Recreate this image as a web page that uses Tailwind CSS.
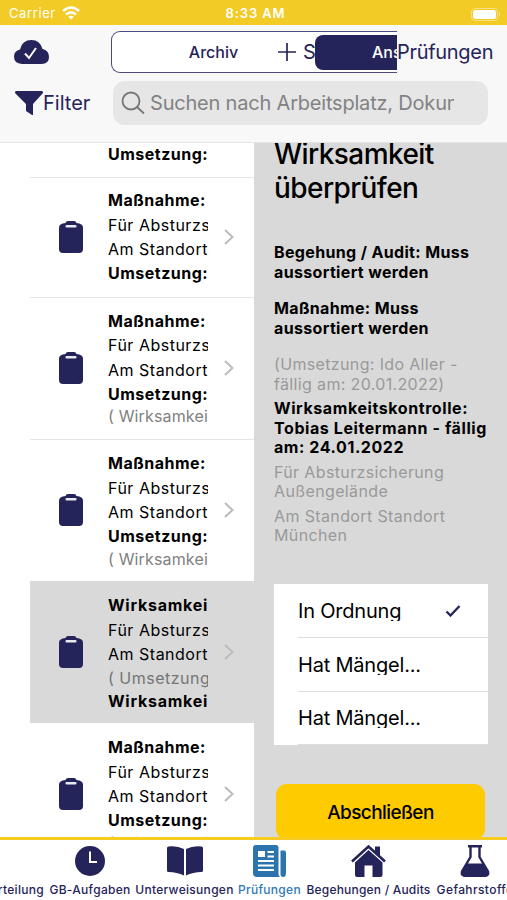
<!DOCTYPE html>
<html lang="de">
<head>
  <meta charset="UTF-8">
  <meta name="viewport" content="width=device-width, initial-scale=1.0">
  <title>Prüfungen</title>
  <script src="https://cdn.jsdelivr.net/npm/@tailwindcss/browser@4"></script>
</head>
<body class="w-[507px] h-[900px] overflow-hidden bg-white font-['Inter','Liberation_Sans',sans-serif] text-black flex flex-col whitespace-nowrap">

  <!-- Icons used more than once -->
  <svg class="hidden">
    <symbol id="clipboard" viewBox="0 0 24 32">
      <path fill="#25245a" d="M6.500 2Q7 0 9 0h6q2 0 2.500 2 6.500.5 6.500 4.500V28q0 4-4 4H4q-4 0-4-4V6.500Q0 2.500 6.500 2z"/>
      <rect x="6.500" y="4" width="11" height="2.600" rx="1" fill="#e9e9f2"/>
    </symbol>
    <symbol id="chevron" viewBox="0 0 10 16">
      <path d="M1 1l7.500 7L1 15" fill="none" stroke="#bcbcbe" stroke-width="2"/>
    </symbol>
  </svg>

  <!-- Status bar -->
  <div class="h-[25px] shrink-0 bg-[#f2cb27] text-white text-[13px] grid grid-cols-3 items-center pl-[9px] pr-[7px] pt-[3px]">
    <div class="flex items-center gap-[6px]">
      <span class="tracking-[0.600px]">Carrier</span>
      <svg class="w-[18px] h-[14px] mb-[2px]" viewBox="0 0 18 14" fill="none" stroke="#fff" stroke-width="2.600">
        <path d="M1 5q8-7 16 0"/>
        <path d="M4 8.500q5-4.300 10 0"/>
        <path d="M9 13.500L6.300 10.800q2.700-2.300 5.400 0z" fill="#fff" stroke="none"/>
      </svg>
    </div>
    <span class="text-center font-semibold tracking-[0.900px] pl-[2px]">8:33 AM</span>
    <div class="flex justify-end items-center gap-px">
      <div class="w-[27px] h-[13px] rounded-[4px] border border-white/40 p-px"><div class="bg-white h-full rounded-[2.500px]"></div></div>
      <div class="w-px h-1 bg-white/40"></div>
    </div>
  </div>

  <!-- Header -->
  <header class="h-[118px] shrink-0 bg-[#f8f8f8] border-b border-[#e6e6e6] text-[#25245a]">
    <div class="flex items-center pt-[6px] pl-[14px]">
      <svg class="w-[35px] h-[24px] mr-[62px]" viewBox="0 0 35 24">
        <path fill="#25245a" d="M8 24Q0 23.500 0 16.500 0 11 6 9.500 8 0 17.500 0 26 0 28.500 9 35 10.500 35 17q0 7-7.500 7z"/>
        <path d="M11 13.500l4 4.500 7-10" fill="none" stroke="#f8f8f8" stroke-width="2"/>
      </svg>
      <div class="relative w-[286px] h-[42px] border border-r-0 border-[#4b4a7a] rounded-l-[9px] bg-white flex items-center overflow-hidden">
        <span class="w-[203px] text-center text-base font-medium">Archiv</span>
        <div class="w-[82px] h-[35px] rounded-l-[8px] bg-[#25245a] text-white text-base font-medium flex items-center pl-[57px]">Ansicht</div>
        <!-- Add button overlapping the segments -->
        <div class="absolute left-[166px] top-0 h-full w-[37px] overflow-hidden flex items-center gap-[7px]">
          <svg class="w-[18px] h-[18px] shrink-0" viewBox="0 0 18 18" stroke="#25245a" stroke-width="1.700"><path d="M9 0v18M0 9h18"/></svg>
          <span class="text-[20px]">S</span>
        </div>
      </div>
      <span class="text-[20px] tracking-[-0.300px]">Prüfungen</span>
    </div>
    <div class="flex items-center pt-[8px] pl-[15px]">
      <div class="w-[98px] flex items-center">
        <svg class="w-[28px] h-[24px]" viewBox="0 0 28 24"><path fill="#25245a" d="M1 0h26q1 0 1 2L18 13v11h-1l-6-4v-7L0 2Q0 0 1 0z"/></svg>
        <span class="text-[20px]">Filter</span>
      </div>
      <div class="w-[375px] h-[44px] rounded-[12px] bg-[#e6e6e6] text-[#828284] flex items-center pl-[8px]">
        <svg class="w-[24px] h-[24px] mr-[5px]" viewBox="0 0 24 24" fill="none" stroke="#777779" stroke-width="1.800"><circle cx="10" cy="10" r="8.500"/><path d="M16 16l7 6.500"/></svg>
        <span class="w-[304px] overflow-hidden text-[20px] tracking-[-0.200px]">Suchen nach Arbeitsplatz, Dokumenten</span>
      </div>
    </div>
  </header>

  <main class="h-[694px] shrink-0 flex overflow-hidden">
    <!-- Task list -->
    <div class="w-[254px] pl-[30px] text-base tracking-[0.500px]">
      <div class="h-[35px] pl-[78px] border-b border-[#e4e4e4]">
        <div class="w-[100px] overflow-hidden font-bold leading-[22px]">Umsetzung:</div>
      </div>
      <div class="h-[120px] border-b border-[#e4e4e4] flex items-center pl-[29px] pb-px">
        <svg class="w-6 h-8"><use href="#clipboard"/></svg>
        <div class="w-[100px] ml-[25px] mr-[16px] overflow-hidden leading-[24.400px]">
          <p class="font-bold">Maßnahme:</p>
          <p>Für Absturzsicherung</p>
          <p>Am Standort München</p>
          <p class="font-bold">Umsetzung:</p>
        </div>
        <svg class="w-[10px] h-4"><use href="#chevron"/></svg>
      </div>
      <div class="h-[142px] border-b border-[#e4e4e4] flex items-center pl-[29px] pb-[2px]">
        <svg class="w-6 h-8"><use href="#clipboard"/></svg>
        <div class="w-[100px] ml-[25px] mr-[16px] overflow-hidden leading-[24.400px]">
          <p class="font-bold">Maßnahme:</p>
          <p>Für Absturzsicherung</p>
          <p>Am Standort München</p>
          <p class="font-bold">Umsetzung:</p>
          <p class="text-[#808080] leading-[20px] tracking-[0.150px]">( Wirksamkeitskontrolle</p>
        </div>
        <svg class="w-[10px] h-4"><use href="#chevron"/></svg>
      </div>
      <div class="h-[141px] flex items-center pl-[29px] pb-px">
        <svg class="w-6 h-8"><use href="#clipboard"/></svg>
        <div class="w-[100px] ml-[25px] mr-[16px] overflow-hidden leading-[24.400px]">
          <p class="font-bold">Maßnahme:</p>
          <p>Für Absturzsicherung</p>
          <p>Am Standort München</p>
          <p class="font-bold">Umsetzung:</p>
          <p class="text-[#808080] leading-[20px] tracking-[0.150px]">( Wirksamkeitskontrolle</p>
        </div>
        <svg class="w-[10px] h-4"><use href="#chevron"/></svg>
      </div>
      <!-- Selected task -->
      <div class="h-[142px] bg-[#d9d9d9] flex items-center pl-[29px]">
        <svg class="w-6 h-8"><use href="#clipboard"/></svg>
        <div class="w-[100px] ml-[25px] mr-[16px] overflow-hidden leading-[24.400px]">
          <p class="font-bold tracking-[0.750px]">Wirksamkeitskontrolle:</p>
          <p>Für Absturzsicherung</p>
          <p>Am Standort München</p>
          <p class="text-[#747474]">( Umsetzung: Ido Aller</p>
          <p class="font-bold leading-[20px] tracking-[0.750px]">Wirksamkeitskontrolle:</p>
        </div>
        <svg class="w-[10px] h-4"><use href="#chevron"/></svg>
      </div>
      <div class="h-[142px] flex items-center pl-[29px]">
        <svg class="w-6 h-8"><use href="#clipboard"/></svg>
        <div class="w-[100px] ml-[25px] mr-[16px] overflow-hidden leading-[24.400px]">
          <p class="font-bold">Maßnahme:</p>
          <p>Für Absturzsicherung</p>
          <p>Am Standort München</p>
          <p class="font-bold">Umsetzung:</p>
          <p class="text-[#808080] leading-[20px] tracking-[0.150px]">( Wirksamkeitskontrolle</p>
        </div>
        <svg class="w-[10px] h-4"><use href="#chevron"/></svg>
      </div>
    </div>

    <!-- Detail -->
    <div class="w-[253px] bg-[#d9d9d9] pl-[20px] pr-[19px]">
      <h1 class="text-[28px] leading-[34px] font-medium tracking-[-0.560px] -mt-[6px]">Wirksamkeit<br>überprüfen</h1>
      <div class="text-base leading-[19.500px]">
        <p class="font-bold tracking-[0.350px] mt-[38px]">Begehung / Audit: Muss<br>aussortiert werden</p>
        <p class="font-bold tracking-[0.350px] mt-[17px]">Maßnahme: Muss<br>aussortiert werden</p>
        <p class="text-[#999] tracking-[0.350px] mt-[17px]">(Umsetzung: Ido Aller -<br>fällig am: 20.01.2022)</p>
        <p class="font-bold tracking-[0.580px] mt-[5px]">Wirksamkeitskontrolle:<br>Tobias Leitermann - fällig<br>am: 24.01.2022</p>
        <p class="text-[#999] tracking-[0.370px] mt-[5px]">Für Absturzsicherung<br>Außengelände</p>
        <p class="text-[#999] tracking-[0.370px] mt-[5px]">Am Standort Standort<br>München</p>
      </div>
      <div class="mt-[38px] w-[214px] h-[161px] bg-white pl-[24px] text-[20px] tracking-[-0.200px]">
        <div class="h-[54px] border-b border-[#dedede] flex items-center justify-between pr-[27px]">
          <span class="h-[21px] leading-[23px] mt-px overflow-hidden">In Ordnung</span>
          <svg class="w-4 h-3 mt-[2px]" viewBox="0 0 16 12"><path d="M1.500 6.500l4 4L14.500 1" fill="none" stroke="#25245a" stroke-width="2.300"/></svg>
        </div>
        <div class="h-[54px] border-b border-[#dedede] flex items-center">
          <span class="h-[21px] leading-[23px] overflow-hidden">Hat Mängel...</span>
        </div>
        <div class="h-[53px] border-b border-[#dedede] flex items-center">
          <span class="h-[21px] leading-[23px] overflow-hidden">Hat Mängel...</span>
        </div>
      </div>
      <button class="block mt-[39px] ml-[2px] w-[209px] h-[56px] pt-[3px] rounded-[11px] bg-[#fdcb00] text-[19px] font-medium tracking-[-0.600px]">Abschließen</button>
    </div>
  </main>

  <!-- Tab bar -->
  <nav class="h-[63px] shrink-0 border-t-[3px] border-[#f8cb20] bg-white flex text-[12px] font-medium text-[#25245a] tracking-[0.300px]">
    <div class="w-[47px] shrink-0 flex justify-end pr-[3px] pt-[42px]"><span class="leading-4">Gefährdungsbeurteilung</span></div>
    <div class="w-[86px] shrink-0 flex flex-col items-center pt-[6px]">
      <svg class="w-[30px] h-[30px]" viewBox="0 0 30 30"><circle cx="15" cy="15" r="15" fill="#25245a"/><path d="M15 5.500V16h7" fill="none" stroke="#fff" stroke-width="2"/></svg>
      <span class="mt-[6px] leading-4">GB-Aufgaben</span>
    </div>
    <div class="w-[103px] shrink-0 flex flex-col items-center pt-[6px]">
      <svg class="w-[36px] h-[30px]" viewBox="0 0 36 30" fill="#25245a"><path d="M17 3Q10-.500 1.500.500 0 .500 0 2v22.500q0 1.500 1.500 1.500Q10 26 17 29.500z"/><path d="M19 3q7-3.500 15.500-2.500 1.500 0 1.500 1.500v22.500q0 1.500-1.500 1.500Q26 26 19 29.500z"/></svg>
      <span class="mt-[6px] leading-4">Unterweisungen</span>
    </div>
    <div class="w-[67px] shrink-0 flex flex-col items-center pt-[5px] text-[#2f7ab5]">
      <svg class="w-[33px] h-[32px]" viewBox="0 0 33 32">
        <path fill="#2b74ad" d="M3 0h20q2.500 0 2.500 3v26q0 2 1.500 3H4q-4 0-4-4V3q0-3 3-3z"/>
        <path fill="#2b74ad" d="M27.500 5.500H31q2 0 2 2V28q0 4-2.800 4-2.700 0-2.700-3z"/>
        <rect x="5" y="6" width="7" height="6" fill="#fff"/>
        <path d="M14.500 7H21M14.500 11.500H21M5 16h16M5 20.500h16M5 25h16" stroke="#fff" stroke-width="1.800"/>
      </svg>
      <span class="mt-[5px] leading-4">Prüfungen</span>
    </div>
    <div class="w-[131px] shrink-0 flex flex-col items-center pt-[5px]">
      <svg class="w-[35px] h-[32px]" viewBox="0 0 35 32">
        <path d="M1 16.500L17.500 1.500 34 16.500" fill="none" stroke="#25245a" stroke-width="2.600"/>
        <path fill="#25245a" d="M24 1.500h5V11l-5-4.500z"/>
        <path fill="#25245a" d="M4 17.500L17.500 5 31.500 17.500V30q0 2-2 2H21.500V20.500h-8V32H6q-2 0-2-2z"/>
      </svg>
      <span class="mt-[5px] leading-4 tracking-[0.200px]">Begehungen / Audits</span>
    </div>
    <div class="w-[82px] shrink-0 flex flex-col items-center pt-[5px]">
      <svg class="w-[30px] h-[32px]" viewBox="0 0 30 32">
        <path d="M8 1.300h14M10.500 1.300V12L2 26.500Q1 30.700 5 30.700h20q4 0 3-4.200L19.500 12V1.300" fill="none" stroke="#25245a" stroke-width="2.400"/>
        <path fill="#25245a" d="M7 18.500h16l6 9.500q0 3.500-4 3.500H5q-4 0-4-3.500z"/>
      </svg>
      <span class="mt-[5px] leading-4 tracking-[0.400px]">Gefahrstoffe</span>
    </div>
  </nav>
</body>
</html>
